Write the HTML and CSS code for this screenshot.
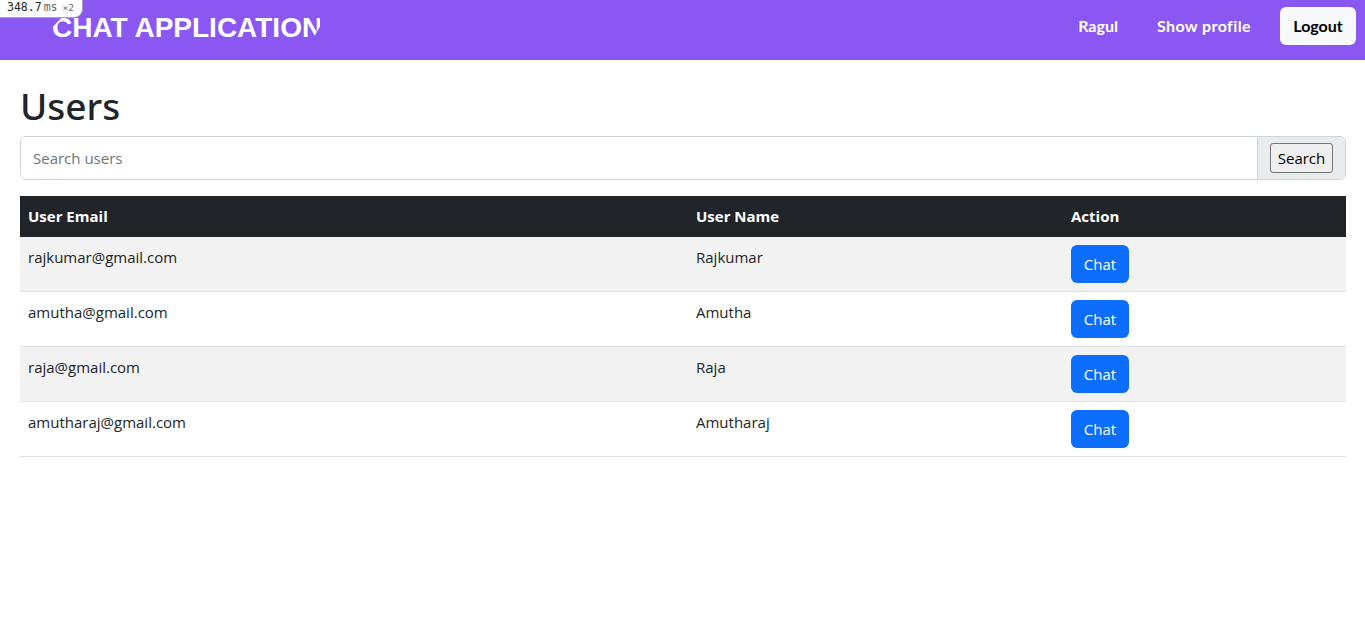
FILE: index.html
```html
<!DOCTYPE html>
<html lang="en">
<head>
<meta charset="utf-8">
<title>Users</title>
<link rel="stylesheet" href="styles.css">
</head>
<body>
<div class="timer"><span class="timer-val">348.7</span><span class="timer-unit">ms</span><span class="timer-x">×2</span></div>
<nav class="navbar">
  <a class="brand">CHAT APPLICATION</a>
  <div class="nav-links">
    <a class="nav-link ragul">Ragul</a>
    <a class="nav-link profile">Show profile</a>
    <a class="logout">Logout</a>
  </div>
</nav>
<main class="content">
  <h1 class="title">Users</h1>
  <div class="search">
    <input class="search-input" type="text" placeholder="Search users">
    <div class="search-addon"><button class="search-btn">Search</button></div>
  </div>
  <table class="users">
    <thead>
      <tr><th class="c1">User Email</th><th class="c2">User Name</th><th>Action</th></tr>
    </thead>
    <tbody>
      <tr class="odd"><td>rajkumar@gmail.com</td><td>Rajkumar</td><td><button class="chat">Chat</button></td></tr>
      <tr><td>amutha@gmail.com</td><td>Amutha</td><td><button class="chat">Chat</button></td></tr>
      <tr class="odd"><td>raja@gmail.com</td><td>Raja</td><td><button class="chat">Chat</button></td></tr>
      <tr><td>amutharaj@gmail.com</td><td>Amutharaj</td><td><button class="chat">Chat</button></td></tr>
    </tbody>
  </table>
</main>
</body>
</html>
```
FILE: styles.css
```css
* { box-sizing: border-box; }
html, body { margin: 0; padding: 0; background: #fff; }
body { font-family: "Open Sans", "Noto Sans", sans-serif; font-size: 15px; color: #212529; line-height: 1.5; }
.timer { position: absolute; left: 0; top: 0; height: 17px; width: 82px; padding-left: 7px; background: #fff; border-bottom-right-radius: 8px; box-shadow: 0 0 1px 1px #aaa; font-family: "DejaVu Sans Mono", monospace; font-size: 11.5px; line-height: 14px; white-space: nowrap; clip-path: inset(0 -3px -3px 0); }
.timer-unit { color: #666; margin-left: 2px; }
.timer-x { color: #666; margin-left: 5px; font-size: 9.5px; }
.navbar { height: 60px; background: #8b57f3; display: flex; align-items: center; justify-content: space-between; padding: 0 9px 8px 52px; }
.brand { margin-top: 3px; color: #fff; white-space: nowrap; font-family: "Liberation Sans", Arial, sans-serif; font-weight: 700; font-size: 28px; line-height: 36px; clip-path: polygon(18px 0, 268px 0, 268px 17px, 261px 29px, 261px 100%, 0 100%, 0 18px); }
.nav-links { display: flex; align-items: center; }
.nav-link { color: #fff; font-family: "Lato", sans-serif; font-weight: 700; font-size: 16px; line-height: 24px; letter-spacing: .4px; }
.ragul { margin-right: 39px; letter-spacing: 0; }
.profile { margin-right: 29px; }
.logout { display: block; width: 76px; height: 38px; background: #f8f9fa; border-radius: 6px; color: #000; font-family: "Lato", sans-serif; font-weight: 700; font-size: 16px; line-height: 38px; text-align: center; }
.content { padding: 20px 19px 0 20px; }
.title { margin: 0 0 8px; font-family: "Noto Sans", sans-serif; font-size: 37px; font-weight: 500; line-height: 52px; height: 48px; }
.search { display: flex; height: 44px; border: 1px solid #ced4da; border-radius: 6px; overflow: hidden; }
.search-input { flex: 1; border: 0; outline: 0; padding: 0 12px; font: inherit; color: #212529; min-width: 0; }
.search-input::placeholder { color: #6c757d; opacity: 1; }
.search-addon { width: 88px; background: #e9ecef; border-left: 1px solid #ced4da; display: flex; align-items: center; justify-content: center; }
.search-btn { width: 63px; height: 30px; padding: 0; background: #efefef; border: 1px solid #767676; border-radius: 3px; font: inherit; color: #000; }
.users { width: 100%; margin-top: 16px; border-collapse: separate; border-spacing: 0; table-layout: fixed; }
.users th { background: #212529; color: #fff; font-weight: 700; text-align: left; padding: 7px 8px 9px; height: 41px; line-height: 24px; }
.c1 { width: 668px; }
.c2 { width: 375px; }
.users td { padding: 8px; height: 55px; vertical-align: top; border-bottom: 1px solid #dee2e6; line-height: 24px; }
.odd td { background: #f2f2f2; }
.chat { display: block; width: 58px; height: 38px; padding: 0; background: #0d6efd; color: #fff; border: 0; border-radius: 6px; font: inherit; }
```
